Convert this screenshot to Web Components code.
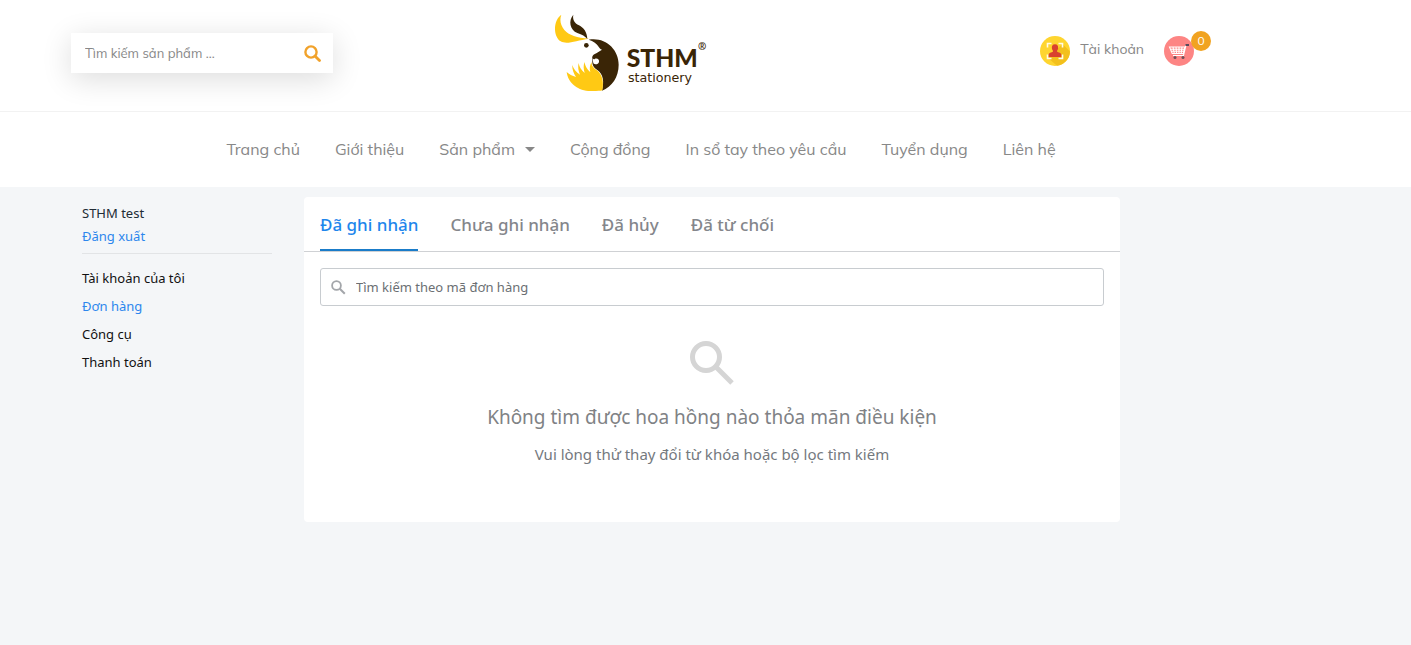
<!DOCTYPE html>
<html lang="vi">
<head>
<meta charset="utf-8">
<meta name="viewport" content="width=device-width, initial-scale=1">
<title>STHM stationery – Đơn hàng</title>
<style>
  body { margin: 0; background: #f4f6f8; font-family: "Noto Sans", sans-serif; }
</style>
</head>
<body>
<shop-page></shop-page>

<script>
const define = (name, html) => {
  const template = document.createElement('template');
  template.innerHTML = '<style>*{box-sizing:border-box} a{color:inherit;text-decoration:none} button,input{font:inherit}</style>' + html;
  customElements.define(name, class extends HTMLElement {
    connectedCallback() {
      if (this.shadowRoot) return;
      this.attachShadow({ mode: 'open' }).append(template.content.cloneNode(true));
    }
  });
};

define('search-box', `
<style>
  :host { display: block; width: 262px; font: 13px/20px Mulish, Lato, sans-serif; }
  form { display: flex; align-items: center; height: 40px; padding: 0 12px 0 14px; background: #fff; box-shadow: 0 6px 30px rgba(0,0,0,.14); }
  input { flex: 1; min-width: 0; padding: 0; border: 0; outline: 0; background: none; color: #888; }
  input::placeholder { color: #888; opacity: 1; }
  button { display: flex; padding: 0; border: 0; background: none; }
</style>
<form role="search">
  <input type="text" aria-label="Tìm kiếm sản phẩm" placeholder="Tìm kiếm sản phẩm ...">
  <button type="button" aria-label="Tìm kiếm">
    <svg width="17" height="17" viewBox="0 0 17 17" fill="none" stroke="#f1a22b"><circle cx="7" cy="7" r="5.6" stroke-width="2.4"/><path d="M11.2 11.2L15.5 15.5" stroke-width="2.8" stroke-linecap="round"/></svg>
  </button>
</form>`);

define('shop-logo', `
<style>
  :host { display: block; }
  a { display: block; }
  svg { display: block; }
  .name { font: 900 74px Lato, sans-serif; }
  .sub { font: 38px "DejaVu Sans", sans-serif; }
  .mark { font: bold 30px "Noto Sans", sans-serif; }
</style>
<a href="#" aria-label="STHM stationery">
<svg width="172" height="80" viewBox="45 27 516 240">
  <path fill="#ffc914" d="M64 32C40 49 38 96 62 112C82 123 108 109 147 104C112 101 86 94 73 78C62 64 58 48 64 32Z"/>
  <path fill="#3a2506" d="M100 32C84 50 90 78 112 87C126 92 136 97 142 105C141 84 131 71 117 64C103 57 97 46 100 32Z"/>
  <path fill="#3a2506" d="M146 107C194 98 236 134 236 182C236 220 216 248 186 260C193 232 190 211 172 198C160 190 156 182 157 168C155 156 160 151 169 148L186 137C175 134 176 116 146 107Z"/>
  <path fill="#fff" d="M157 160C158 165 162 168 165 164C172 161 179 167 177 174C175 182 164 183 160 178Z"/>
  <circle cx="139" cy="124" r="7" fill="#3a2506"/>
  <path fill="#ffc914" d="M80 204C84 240 120 264 158 261C172 261 182 261 187 259C192 234 187 212 171 199C161 193 154 185 155 174C149 184 148 193 151 205C140 194 135 186 134 174C129 186 131 195 134 207C124 198 118 190 116 177C113 190 115 200 120 212C109 204 101 196 97 183C96 196 101 208 108 219C97 216 87 211 80 204Z"/>
  <g fill="#3a2506">
    <text class="name" x="260" y="190">STHM</text>
    <text class="sub" x="264" y="234">stationery</text>
    <text class="mark" x="474" y="138">®</text>
  </g>
</svg></a>`);

define('account-links', `
<style>
  :host { display: flex; align-items: center; gap: 20px; font: 14px/20px Mulish, "Noto Sans", sans-serif; color: #888; }
  .account { display: flex; align-items: center; gap: 10px; }
  svg { display: block; }
  .cart { position: relative; padding-right: 17px; }
  .count { position: absolute; right: 0; top: -5px; width: 20px; height: 20px; border-radius: 50%; background: #f1a321; color: #fff; font-size: 12px; line-height: 20px; text-align: center; }
  .account span { margin-bottom: 4px; }
</style>
<a class="account" href="#">
  <svg width="30" height="30" viewBox="0 0 30 30">
    <circle cx="15" cy="15" r="15" fill="#fed52f"/>
    <path fill="#f3c01c" d="M22.5 8L30 15.5A15 15 0 0 1 17 29.8L8 22Z"/>
    <path fill="none" stroke="#fffbe8" stroke-width="1.6" d="M7.5 11.500V7.500H11.500M18.500 7.500H22.500V11.500M22.500 18.500V22.500H18.500M11.500 22.500H7.500V18.500"/>
    <path fill="#d9422f" d="M15 8.200C17.500 8.200 18.400 10 18.100 12.300C17.900 13.800 17.200 14.500 16.900 15.200C17 16.300 21 16.500 21.300 18.200V21H8.700V18.200C9 16.500 13 16.300 13.100 15.200C12.800 14.500 12.100 13.800 11.900 12.300C11.600 10 12.500 8.200 15 8.200Z"/>
  </svg>
  <span>Tài khoản</span>
</a>
<a class="cart" href="#" aria-label="Giỏ hàng: 0">
  <svg width="30" height="30" viewBox="0 0 30 30">
    <circle cx="15" cy="15" r="15" fill="#fd8584"/>
    <path fill="none" stroke="#fff" stroke-width="1.100" d="M5.500 11H20.800L19.400 17.500H8.200ZM6.300 13.200H20.300M7.200 15.300H19.900M9 11L10.300 17.500M12 11L12.600 17.500M15 11V17.500M18 11L17.200 17.500M9 19.500H19.500L22 9"/>
    <path stroke="#59485a" stroke-width="2" d="M21.500 9H25"/>
    <circle cx="11" cy="21.500" r="1.500" fill="#6d5058"/><circle cx="19" cy="21.500" r="1.500" fill="#6d5058"/>
  </svg>
  <span class="count">0</span>
</a>`);

define('main-nav', `
<style>
  :host { display: block; font: 16px/24px Mulish, "Noto Sans", sans-serif; color: #888; }
  nav { display: flex; justify-content: center; gap: 35px; padding: 25px 0 26px; white-space: nowrap; }
  .more { display: flex; align-items: center; gap: 10px; }
  .more::after { content: ""; border: 5px solid transparent; border-top-color: currentColor; border-bottom: 0; }
</style>
<nav aria-label="Menu chính">
  <a href="#">Trang chủ</a><a href="#">Giới thiệu</a><a class="more" href="#">Sản phẩm</a><a href="#">Cộng đồng</a><a href="#">In sổ tay theo yêu cầu</a><a href="#">Tuyển dụng</a><a href="#">Liên hệ</a>
</nav>`);

define('site-header', `
<style>
  :host { display: block; background: #fff; }
  .wrap { max-width: 1340px; padding: 0 129px 0 71px; }
  .top { display: grid; grid-template-columns: 1fr auto 1fr; align-items: center; height: 111px; padding-bottom: 5px; }
  account-links { justify-self: end; margin-bottom: 4px; }
  .bar { border-top: 1px solid #f2f2f2; }
</style>
<header>
  <div class="wrap top"><search-box></search-box><shop-logo></shop-logo><account-links></account-links></div>
  <div class="bar"><div class="wrap"><main-nav></main-nav></div></div>
</header>`);

define('account-menu', `
<style>
  :host { display: block; width: 190px; flex: none; font: 13px/23px "Noto Sans", sans-serif; color: #111; }
  .user { padding: 5px 0; border-bottom: 1px solid #e2e4e6; color: #212b35; }
  .user a { display: block; }
  nav { padding-top: 10px; }
  nav a { display: block; line-height: 28px; }
  .user .blue, .blue { color: #2c86ed; }
</style>
<aside>
  <div class="user">STHM test<a class="blue" href="#">Đăng xuất</a></div>
  <nav aria-label="Tài khoản">
    <a href="#">Tài khoản của tôi</a><a class="blue" href="#" aria-current="page">Đơn hàng</a><a href="#">Công cụ</a><a href="#">Thanh toán</a>
  </nav>
</aside>`);

define('order-tabs', `
<style>
  :host { display: block; border-bottom: 1px solid #cfd1d4; font: 500 17px/24px "Noto Sans", sans-serif; }
  div { display: flex; gap: 32px; padding: 0 16px; }
  ::slotted(button) { height: 54px; padding: 3px 0 0; border: 0; border-bottom: 2px solid transparent; background: none; color: #84868b; }
  ::slotted([aria-selected="true"]) { color: #1e86ec; border-color: #1a7cc9; }
</style>
<div role="tablist"><slot></slot></div>`);

define('empty-state', `
<style>
  :host { display: block; padding: 35px 16px 56px; text-align: center; color: #808285; }
  svg { display: block; margin: 0 auto 16px; }
  h2 { margin: 0; font: 19px/32px "Noto Sans", sans-serif; }
  p { margin: 9px 0 0; font: 15px/24px "Noto Sans", sans-serif; color: #74797e; }
</style>
<svg width="44" height="44" viewBox="0 0 44 44" fill="none" stroke="#d5d5d5"><circle cx="16" cy="16" r="13.500" stroke-width="5"/><path d="M26 26L42 42" stroke-width="5"/></svg>
<h2><slot name="title"></slot></h2>
<p><slot></slot></p>`);

define('orders-panel', `
<style>
  :host { display: block; flex: 1; min-width: 0; background: #fff; border-radius: 4px; overflow: hidden; }
  label { display: flex; align-items: center; gap: 10px; height: 38px; margin: 16px 16px 0; padding: 0 10px; border: 1px solid #c8ccd0; border-radius: 3px; }
  svg { flex: none; }
  input { flex: 1; min-width: 0; padding: 0; border: 0; outline: 0; background: none; color: #6b6f73; font: 13px/20px "Noto Sans", sans-serif; }
  input::placeholder { color: #6b6f73; opacity: 1; }
</style>
<section>
  <order-tabs>
    <button role="tab" aria-selected="true">Đã ghi nhận</button>
    <button role="tab" aria-selected="false">Chưa ghi nhận</button>
    <button role="tab" aria-selected="false">Đã hủy</button>
    <button role="tab" aria-selected="false">Đã từ chối</button>
  </order-tabs>
  <label>
    <svg width="15" height="15" viewBox="0 0 15 15" fill="none" stroke="#a3a6aa"><circle cx="5.500" cy="5.500" r="4.400" stroke-width="1.800"/><path d="M8.800 8.800L13.800 13.800" stroke-width="2"/></svg>
    <input type="text" aria-label="Tìm kiếm theo mã đơn hàng" placeholder="Tìm kiếm theo mã đơn hàng">
  </label>
  <empty-state><span slot="title">Không tìm được hoa hồng nào thỏa mãn điều kiện</span>Vui lòng thử thay đổi từ khóa hoặc bộ lọc tìm kiếm</empty-state>
</section>`);

define('shop-page', `
<style>
  :host { display: block; }
  main { display: flex; align-items: flex-start; gap: 32px; max-width: 1340px; padding: 10px 220px 32px 82px; }
</style>
<site-header></site-header>
<main><account-menu></account-menu><orders-panel></orders-panel></main>`);
</script>
</body>
</html>
